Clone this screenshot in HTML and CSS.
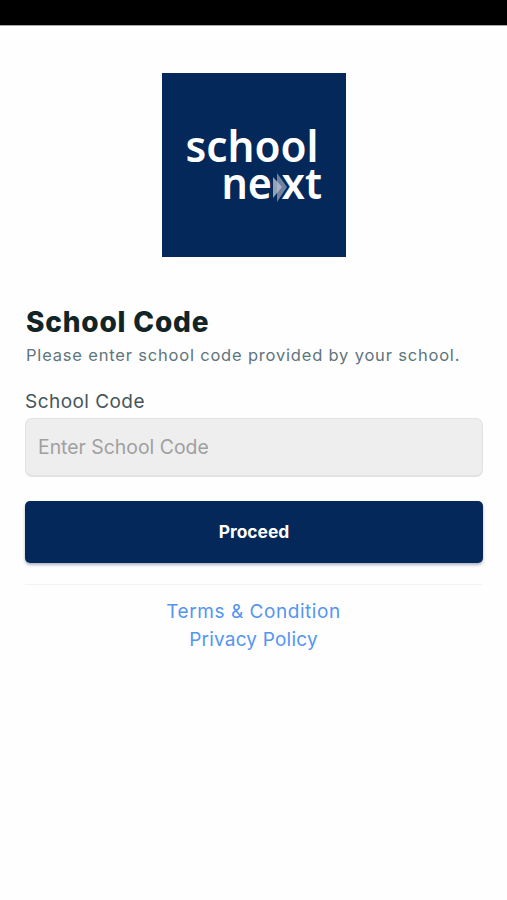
FILE: index.html
```html
<!DOCTYPE html>
<html lang="en">
<head>
<meta charset="utf-8">
<meta name="viewport" content="width=device-width, initial-scale=1">
<title>School Code</title>
<link rel="stylesheet" href="styles.css">
</head>
<body>
<div class="status-bar"></div>
<main class="page">
  <svg class="logo" viewBox="0 0 184 184" role="img" aria-label="school next">
    <rect width="184" height="184" fill="#05285a"/>
    <g class="logo-text">
      <text x="23.5" y="89" textLength="133" lengthAdjust="spacingAndGlyphs">school</text>
      <text x="59.5" y="126" textLength="50.5" lengthAdjust="spacingAndGlyphs">ne</text>
      <text x="119.5" y="126" textLength="40.5" lengthAdjust="spacingAndGlyphs">xt</text>
    </g>
    <path d="M115 100 125 114 115 129Z" fill="#8997af" fill-opacity=".8"/>
    <path d="M111 104 120 114 111 125Z" fill="#b5bfce" fill-opacity=".8"/>
  </svg>
  <form class="form">
    <h1 class="title">School Code</h1>
    <p class="hint">Please enter school code provided by your school.</p>
    <label class="label" for="code">School Code</label>
    <input class="input" id="code" type="text" placeholder="Enter School Code">
    <button class="button" type="button">Proceed</button>
  </form>
  <footer class="links">
    <a class="terms" href="#">Terms &amp; Condition</a>
    <a class="privacy" href="#">Privacy Policy</a>
  </footer>
</main>
</body>
</html>
```
FILE: styles.css
```css
* { box-sizing: border-box; }
body { margin: 0; background: #fefefe; font-family: Inter, "Liberation Sans", sans-serif; }
.status-bar { height: 25px; background: #000; box-shadow: 0 1px #aaa; }
.page { display: flex; flex-direction: column; padding: 48px 25px 0; }
.logo { display: block; width: 184px; height: 184px; align-self: center; }
.logo-text { fill: #fff; font-family: "Noto Sans", "Open Sans", sans-serif; font-size: 44px; font-weight: 600; }
.form { display: flex; flex-direction: column; margin-top: 47px; }
.title { margin: 0; padding-left: 1px; font-size: 28px; line-height: 36px; font-weight: 800; letter-spacing: .8px; color: #122526; white-space: nowrap; }
.hint { margin: 3px 0 0; padding-left: 1px; font-size: 16.5px; line-height: 24px; letter-spacing: .81px; color: #60757c; white-space: nowrap; }
.label { margin-top: 22px; font-size: 19px; line-height: 26px; letter-spacing: .45px; color: #46565a; white-space: nowrap; align-self: flex-start; }
.input { margin-top: 3px; height: 59px; width: 458px; padding: 0 12px 1px; border: 1px solid #e2e2e2; border-bottom-width: 2px; border-radius: 7px; background: #eee; font: 19.4px Inter, sans-serif; }
.input::placeholder { color: #a0a0a0; opacity: 1; }
.button { margin-top: 24px; height: 62px; width: 458px; padding: 0 0 1px; border: 0; border-radius: 5px; background: #05285a; box-shadow: 0 2px 3px #05285a55; color: #fff; font: 700 17.4px Inter, sans-serif; }
.links { display: flex; flex-direction: column; align-items: center; margin-top: 21px; padding-top: 13px; border-top: 1px solid #f3f3f3; }
.links a { font-size: 19px; line-height: 28px; letter-spacing: .55px; color: #5595f2; text-decoration: none; white-space: nowrap; }
.links .privacy { letter-spacing: .2px; }
```
